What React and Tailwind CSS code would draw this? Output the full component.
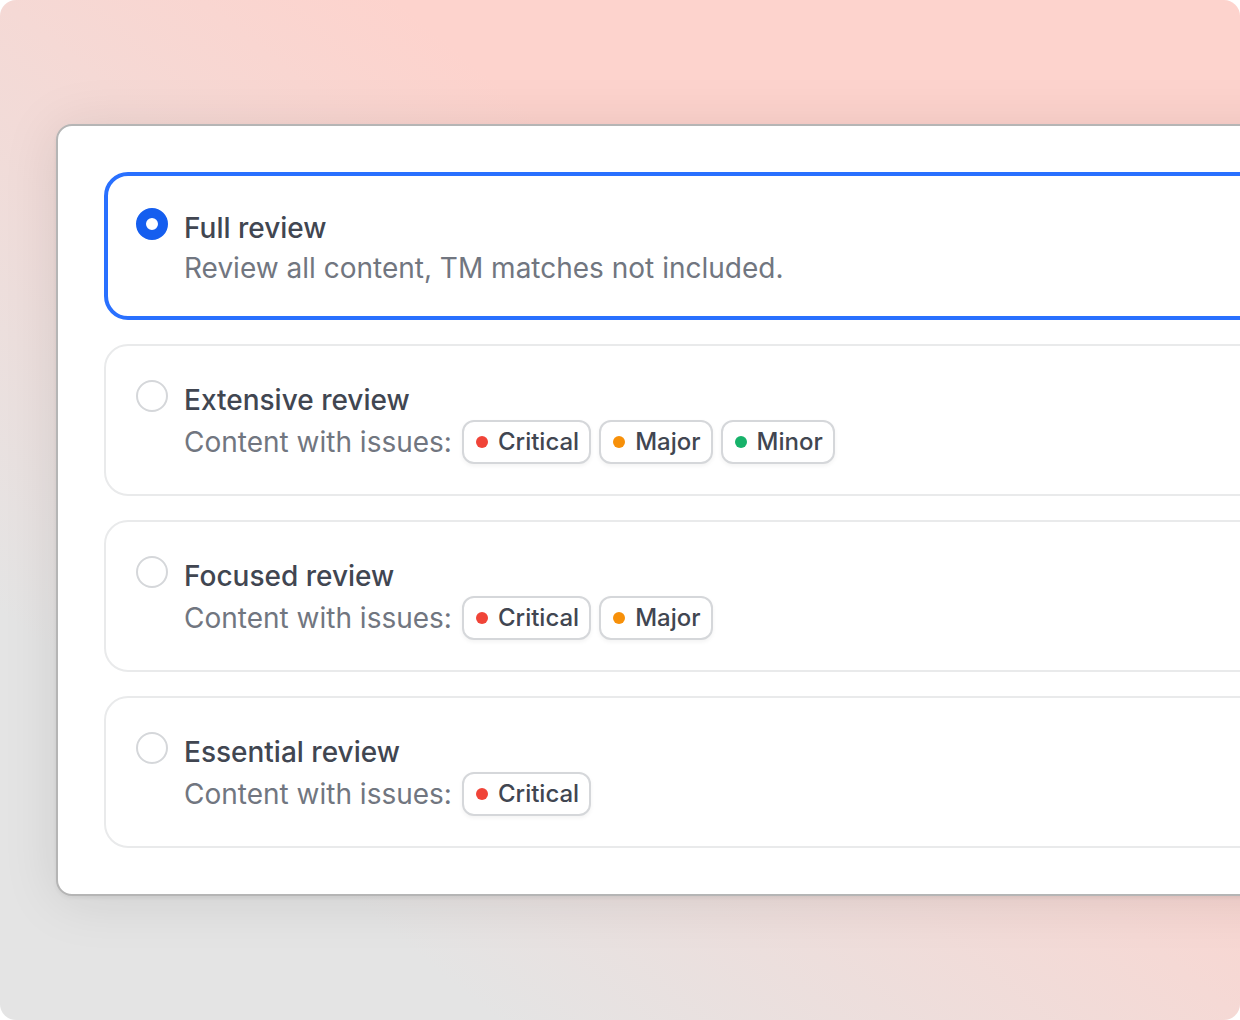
import { useState } from "react";

const dotColors = {
  Critical: "bg-[#f04438]",
  Major: "bg-[#f79009]",
  Minor: "bg-[#17b26a]",
};

const options = [
  { id: "full", title: "Full review", text: "Review all content, TM matches not included.", issues: [] },
  { id: "extensive", title: "Extensive review", text: "Content with issues:", issues: ["Critical", "Major", "Minor"] },
  { id: "focused", title: "Focused review", text: "Content with issues:", issues: ["Critical", "Major"] },
  { id: "essential", title: "Essential review", text: "Content with issues:", issues: ["Critical"] },
];

function IssueBadge({ name }) {
  return (
    <span className="flex h-11 items-center gap-2.5 rounded-xl border-2 border-[#d5d7da] bg-white pr-2.5 pl-3 text-2xl font-medium text-[#414651] shadow-[0_2px_4px_rgba(10,13,18,0.05)]">
      <span className={`size-3 rounded-full ${dotColors[name]}`}></span>
      {name}
    </span>
  );
}

function ReviewOption({ option, checked, onSelect }) {
  return (
    <label
      htmlFor={option.id}
      className={`flex cursor-pointer items-start gap-4 rounded-3xl bg-white ${
        checked
          ? "border-4 border-[#2970ff] px-7 pt-8 pb-7"
          : "border-2 border-[#e9eaeb] px-[30px] pt-[34px] pb-[30px]"
      }`}
    >
      <input
        type="radio"
        id={option.id}
        name="review"
        checked={checked}
        onChange={onSelect}
        className="size-8 shrink-0 appearance-none rounded-full border-2 border-[#d5d7da] bg-white checked:border-10 checked:border-[#155eef]"
      />
      <div className="text-[28px] leading-10">
        <p className="font-medium text-[#414651]">{option.title}</p>
        <div className="flex items-center gap-2.5 text-[#717680]">
          <span>{option.text}</span>
          {option.issues.length > 0 && (
            <div className="flex gap-2">
              {option.issues.map((name) => (
                <IssueBadge key={name} name={name} />
              ))}
            </div>
          )}
        </div>
      </div>
    </label>
  );
}

function App() {
  const [selected, setSelected] = useState("full");

  return (
    <main className="min-h-screen overflow-hidden rounded-2xl bg-[linear-gradient(to_top_right,#e4e4e4_20%,#f5d9d5_50%,#fdd3cd_66%)] py-[124px] pl-14 font-[Inter,sans-serif]">
      {/* panel runs off the right edge */}
      <form className="-mr-24 flex flex-col gap-6 rounded-2xl border-2 border-[#b5b5b5] bg-white p-[46px] shadow-[0_4px_56px_rgba(0,0,0,0.1),0_2px_4px_rgba(0,0,0,0.06)]">
        {options.map((option) => (
          <ReviewOption
            key={option.id}
            option={option}
            checked={selected === option.id}
            onSelect={() => setSelected(option.id)}
          />
        ))}
      </form>
    </main>
  );
}

export default App;
